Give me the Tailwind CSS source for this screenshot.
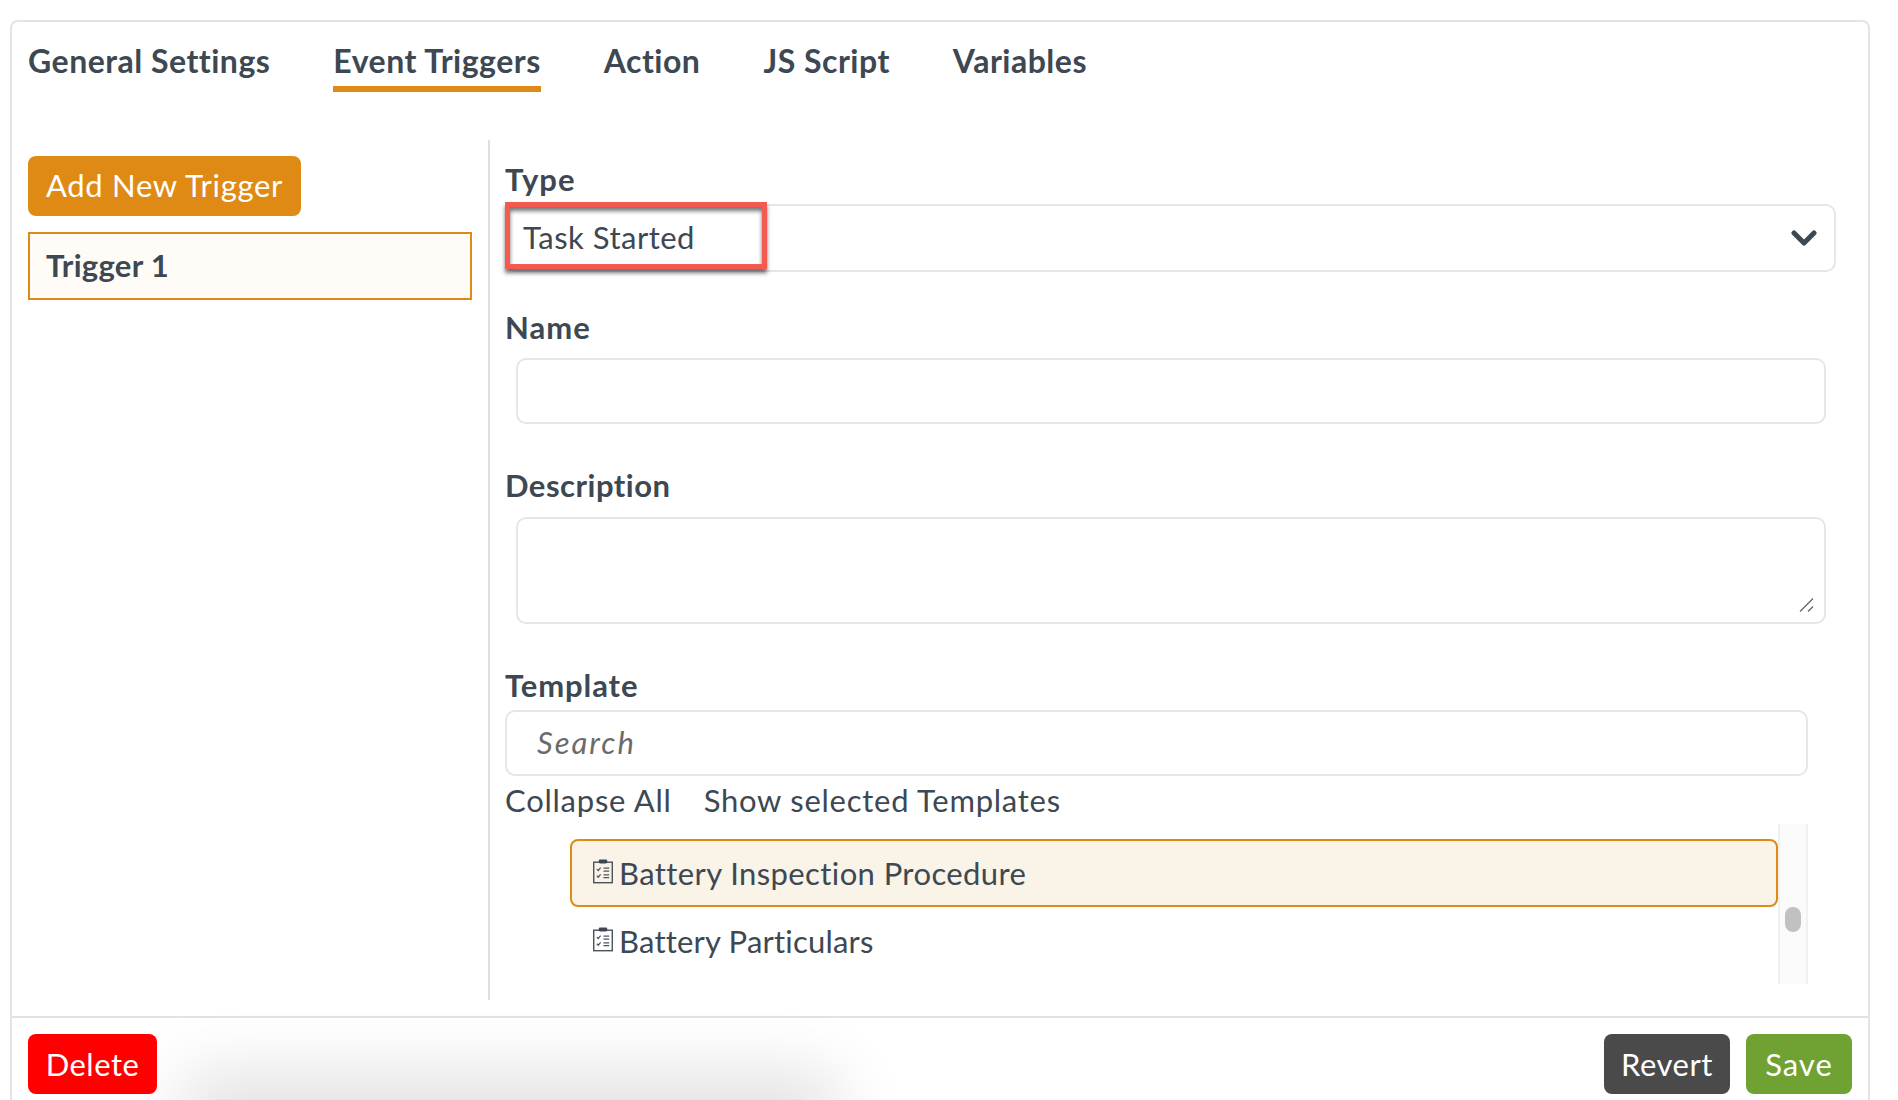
<!DOCTYPE html>
<html lang="en">
  <head>
    <meta charset="UTF-8" />
    <meta name="viewport" content="width=device-width, initial-scale=1.0" />
    <script src="https://cdn.jsdelivr.net/npm/@tailwindcss/browser@4"></script>
    <title>Event Triggers</title>
  </head>
  <body class="h-[1100px] overflow-hidden bg-white pt-5 pl-[10px] font-['Lato',sans-serif] text-[31px] tracking-[0.5px] text-[#3d4852]">
    <div class="relative h-[1080px] w-[1860px] overflow-hidden rounded-t-lg border-2 border-b-0 border-[#e4e4e4]">
      <!-- tabs -->
      <nav class="flex h-[70px] gap-[63px] pl-4 pt-[22px] text-[32px] font-bold">
        <a class="h-[48px] leading-[33px]">General Settings</a>
        <a class="h-[48px] border-b-[6px] border-[#df8a14] leading-[33px]">Event Triggers</a>
        <a class="h-[48px] leading-[33px]">Action</a>
        <a class="h-[48px] leading-[33px]">JS Script</a>
        <a class="h-[48px] leading-[33px]">Variables</a>
      </nav>
      <div class="mt-12 flex h-[860px]">
        <aside class="w-[476px] shrink-0 px-4 pt-4">
          <button class="h-[60px] w-[273px] rounded-lg bg-[#df8a14] pb-[2px] tracking-[0.7px] text-white">Add New Trigger</button>
          <div class="mt-4 flex h-[68px] w-[444px] items-center border-2 border-[#df8a14] bg-[#fffbf7] pb-[2px] pl-4 font-bold tracking-[0.3px]">Trigger 1</div>
        </aside>
        <main class="relative w-[1356px] border-l-2 border-[#dedede] pl-[15px] pt-5">
          <label class="block leading-[38px] font-bold tracking-[1px]">Type</label>
          <div class="relative mt-[6px] flex h-[68px] w-[1331px] items-center justify-between rounded-[10px] border-2 border-[#e6e6e6] pl-[16px] pr-[17px]">
            <span class="-mt-[2px]">Task Started</span>
            <svg class="mt-[2px] h-[18px] w-[26px]" viewBox="0 0 26 18" fill="none" stroke="#3d4852" stroke-width="5" stroke-linecap="round" stroke-linejoin="round"><path d="M3 3l10 10L23 3" /></svg>
            <div class="absolute -top-[4px] -left-[2px] h-[67px] w-[262px] border-[5px] border-[#f55a50] shadow-[0_4px_4px_rgba(0,0,0,0.55),inset_0_4px_4px_rgba(0,0,0,0.55)]"></div>
          </div>
          <label class="mt-[36px] block leading-[38px] font-bold tracking-[1px]">Name</label>
          <input class="mt-[12px] ml-[11px] block h-[66px] w-[1310px] rounded-[10px] border-2 border-[#e6e6e6]" type="text" />
          <label class="mt-[42px] block leading-[38px] font-bold">Description</label>
          <div class="relative mt-[13px] ml-[11px] h-[107px] w-[1310px]">
            <textarea class="block h-full w-full resize-none rounded-[10px] border-2 border-[#e6e6e6]"></textarea>
            <svg class="absolute right-[12px] bottom-[12px] h-[14px] w-[15px]" viewBox="0 0 15 14" fill="none" stroke="#666" stroke-width="1.3"><path d="M1 13.5L14 0.5M9 13.5L14 8.5" /></svg>
          </div>
          <label class="mt-[42px] block leading-[38px] font-bold tracking-[0.9px]">Template</label>
          <input class="mt-[6px] block h-[66px] w-[1303px] rounded-[10px] border-2 border-[#e6e6e6] pb-[2px] pl-[30px] tracking-[2px] placeholder:italic placeholder:text-[#6b6b6b]" type="text" placeholder="Search" />
          <div class="mt-1 flex h-[40px] gap-8 leading-[40px] tracking-[0.75px]">
            <a>Collapse All</a>
            <a>Show selected Templates</a>
          </div>
          <div class="mt-1 flex h-[160px] w-[1303px]">
            <ul class="w-[1273px] pl-[65px] pt-[15px]">
              <li class="flex h-[68px] items-center gap-[6px] rounded-[8px] border-2 border-[#df8a14] bg-[#faf3e8] pl-[21px] tracking-[0.4px]">
                <svg class="mb-[3px] h-[25px] w-5 shrink-0" viewBox="0 0 21 25" fill="none" stroke="#4a5560"><rect x="0.75" y="2.75" width="19.5" height="21.5" stroke-width="1.5" /><rect x="6" y="0" width="9" height="4" rx="1.5" fill="#3d4852" stroke="none" /><path d="M4 10l1.5 1.5L8 8.5M4 17l1.5 1.5L8 15.5M11 9h6M11 12h6M11 16h6M11 19h6" stroke-width="1.3" /></svg>
                <span>Battery Inspection Procedure</span>
              </li>
              <li class="flex h-[68px] items-center gap-[6px] pl-[23px] tracking-[0.2px]">
                <svg class="mb-[3px] h-[25px] w-5 shrink-0" viewBox="0 0 21 25" fill="none" stroke="#4a5560"><rect x="0.75" y="2.75" width="19.5" height="21.5" stroke-width="1.5" /><rect x="6" y="0" width="9" height="4" rx="1.5" fill="#3d4852" stroke="none" /><path d="M4 10l1.5 1.5L8 8.5M4 17l1.5 1.5L8 15.5M11 9h6M11 12h6M11 16h6M11 19h6" stroke-width="1.3" /></svg>
                <span>Battery Particulars</span>
              </li>
            </ul>
            <div class="flex h-[160px] w-[30px] justify-center border-x-2 border-[#f0f0f0] bg-[#fafafa] pt-[83px]">
              <div class="h-[25px] w-4 rounded-full bg-[#c1c1c1]"></div>
            </div>
          </div>
        </main>
      </div>
      <!-- footer -->
      <footer class="relative mt-4 flex h-[84px] items-start justify-between border-t-2 border-[#e2e2e2] px-4 pt-4">
        <div class="absolute bottom-0 left-[205px] h-px w-[585px] bg-[#e5e5e5] shadow-[0_12px_70px_35px_#dedede]"></div>
        <button class="relative h-[60px] w-[129px] rounded-lg bg-[#ff0000] text-white">Delete</button>
        <div class="relative flex gap-4">
          <button class="h-[60px] w-[126px] rounded-lg bg-[#4a4a4a] text-white">Revert</button>
          <button class="h-[60px] w-[106px] rounded-lg bg-[#6fa133] tracking-[1px] text-white">Save</button>
        </div>
      </footer>
    </div>
  </body>
</html>
